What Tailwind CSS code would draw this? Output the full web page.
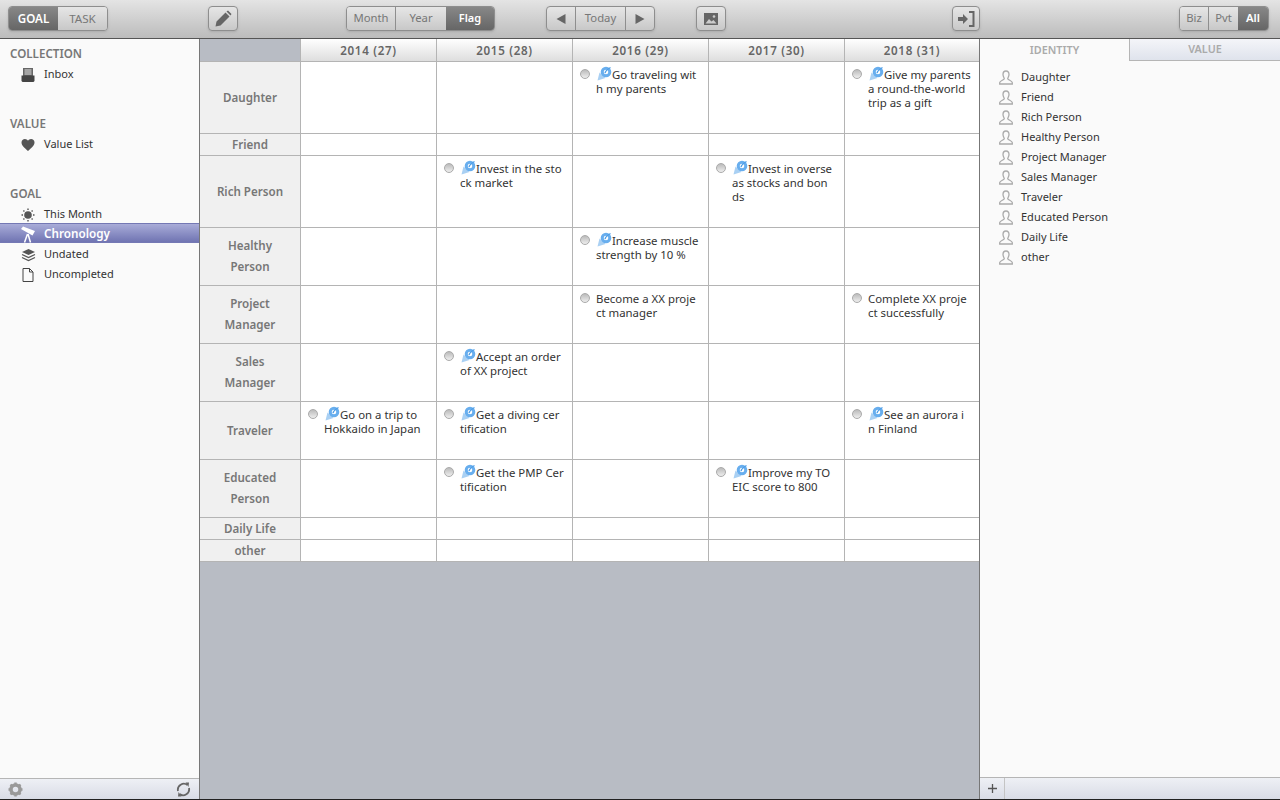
<!DOCTYPE html>
<html lang="en">
  <head>
    <meta charset="UTF-8" />
    <title>Chronology</title>
    <script src="https://cdn.jsdelivr.net/npm/@tailwindcss/browser@4"></script>
  </head>
  <body class="w-[1280px] h-[800px] overflow-hidden flex flex-col bg-white font-['Noto_Sans',sans-serif] text-[11px] text-[#333]">
    <svg class="hidden">
      <symbol id="goal" viewBox="0 0 15 15">
        <path d="M0.500 14.500 L2.500 6.500 L8.500 12 Z" fill="#a9d0f3" />
        <circle cx="9" cy="6" r="3.800" fill="#fff" stroke="#68aeee" stroke-width="3" />
        <path d="M8 7 C8.500 5 10 3.500 13.500 1.500" fill="none" stroke="#4f9ee6" stroke-width="1.400" />
      </symbol>
      <symbol id="person" viewBox="0 0 14 15">
        <path d="M7 1 C5 1 4 2.500 4 4.500 C4 6.500 5 7.500 5.300 8.500 C5.300 10 1 10.500 0.700 12.500 V14 H13.300 V12.500 C13 10.500 8.700 10 8.700 8.500 C9 7.500 10 6.500 10 4.500 C10 2.500 9 1 7 1 Z" fill="none" stroke="#aaa" stroke-width="1.300" />
      </symbol>
    </svg>

    <!-- toolbar -->
    <header class="h-[39px] shrink-0 flex items-start pt-[6px] pl-2 bg-gradient-to-b from-[#e4e4e4] to-[#bcbcbc] border-b border-[#555] text-[11.3px]">
      <div class="flex h-[25px] rounded-[4px] border border-[#8e8e8e] overflow-hidden shadow-sm text-[11.6px]">
        <div class="w-[49px] flex items-center justify-center bg-gradient-to-b from-[#888] to-[#666] text-white font-semibold">GOAL</div>
        <div class="w-[49px] flex items-center justify-center bg-gradient-to-b from-[#e6e6e6] to-[#c8c8c8] text-[#777]">TASK</div>
      </div>
      <div class="ml-[100px] w-[30px] h-[25px] flex items-center justify-center rounded-[4px] border border-[#8e8e8e] shadow-sm bg-gradient-to-b from-[#e6e6e6] to-[#c8c8c8]">
        <svg width="17" height="17" viewBox="0 0 17 17"><path d="M0.500 16.500 L1.500 11.500 L10.500 2.500 L14.500 6.500 L5.500 15.500 Z M11.500 1.500 L13 0.500 L16.500 4 L15.500 5.500 Z" fill="#666" /></svg>
      </div>
      <div class="ml-[108px] flex h-[25px] rounded-[4px] border border-[#8e8e8e] overflow-hidden shadow-sm">
        <div class="w-[49px] flex items-center justify-center border-r border-[#8e8e8e] bg-gradient-to-b from-[#e6e6e6] to-[#c8c8c8] text-[#777]">Month</div>
        <div class="w-[50px] flex items-center justify-center bg-gradient-to-b from-[#e6e6e6] to-[#c8c8c8] text-[#777]">Year</div>
        <div class="w-[48px] flex items-center justify-center bg-gradient-to-b from-[#888] to-[#666] text-white font-semibold text-[11px]">Flag</div>
      </div>
      <div class="ml-[51px] flex h-[25px] rounded-[4px] border border-[#8e8e8e] overflow-hidden shadow-sm bg-gradient-to-b from-[#e6e6e6] to-[#c8c8c8] text-[#777]">
        <div class="w-[29px] flex items-center justify-center border-r border-[#8e8e8e]">
          <svg width="10" height="10" viewBox="0 0 10 10"><path d="M9.500 0 V10 L0.500 5 Z" fill="#666" /></svg>
        </div>
        <div class="w-[50px] flex items-center justify-center border-r border-[#8e8e8e]">Today</div>
        <div class="w-[28px] flex items-center justify-center">
          <svg width="10" height="10" viewBox="0 0 10 10"><path d="M0.500 0 V10 L9.500 5 Z" fill="#666" /></svg>
        </div>
      </div>
      <div class="ml-[41px] w-[30px] h-[25px] flex items-center justify-center rounded-[4px] border border-[#8e8e8e] shadow-sm bg-gradient-to-b from-[#e6e6e6] to-[#c8c8c8]">
        <svg width="14" height="12" viewBox="0 0 14 12"><path d="M0 0 H14 V12 H0 Z" fill="#666" /><path d="M1.500 10.500 L5 6 L7.500 8.500 L9.500 7 L12.500 10.500 Z" fill="#ccc" /><circle cx="10" cy="3.500" r="1.300" fill="#ccc" /></svg>
      </div>
      <div class="ml-[226px] w-[28px] h-[25px] flex items-center justify-center rounded-[4px] border border-[#8e8e8e] shadow-sm bg-gradient-to-b from-[#e6e6e6] to-[#c8c8c8]">
        <svg width="17" height="16" viewBox="0 0 17 16"><path d="M0 6 H5 V3 L10 8 L5 13 V10 H0 Z" fill="#666" /><path d="M11 1 H15.500 V15 H11" fill="none" stroke="#666" stroke-width="2" /></svg>
      </div>
      <div class="ml-[199px] flex h-[25px] rounded-[4px] border border-[#8e8e8e] overflow-hidden shadow-sm">
        <div class="w-[29px] flex items-center justify-center border-r border-[#8e8e8e] bg-gradient-to-b from-[#e6e6e6] to-[#c8c8c8] text-[#777]">Biz</div>
        <div class="w-[29px] flex items-center justify-center bg-gradient-to-b from-[#e6e6e6] to-[#c8c8c8] text-[#777]">Pvt</div>
        <div class="w-[30px] flex items-center justify-center bg-gradient-to-b from-[#888] to-[#666] text-white font-semibold">All</div>
      </div>
    </header>

    <div class="flex flex-1 min-h-0">
      <!-- left sidebar -->
      <aside class="w-[200px] shrink-0 flex flex-col bg-[#fafafa] border-r border-[#777]">
        <div class="flex-1 pt-[5px]">
          <div class="h-5 pl-[10px] flex items-center font-semibold text-[#777] text-[11.6px]">COLLECTION</div>
          <div class="h-5 pl-[21px] pt-px flex items-center gap-[9px]">
            <svg width="14" height="14" viewBox="0 0 14 14"><path d="M2 0 H12 V8 H2 Z" fill="#666" /><path d="M3.500 2 H10.500 M3.500 4 H10.500 M3.500 6 H10.500" stroke="#e4e4e4" /><path d="M0.500 7.500 H13.500 V13 L12.500 14 H1.500 L0.500 13 Z" fill="#444" /></svg>
            <span>Inbox</span>
          </div>
          <div class="h-5 mt-[30px] pl-[10px] flex items-center font-semibold text-[#777] text-[11.6px]">VALUE</div>
          <div class="h-5 pl-[21px] pt-px flex items-center gap-[9px]">
            <svg width="14" height="14" viewBox="0 0 14 14"><path d="M7 13 C3 9.500 0.500 7.500 0.500 4.500 C0.500 2.500 2 1 4 1 C5.200 1 6.400 1.700 7 2.800 C7.600 1.700 8.800 1 10 1 C12 1 13.500 2.500 13.500 4.500 C13.500 7.500 11 9.500 7 13 Z" fill="#555" /></svg>
            <span>Value List</span>
          </div>
          <div class="h-5 mt-[30px] pl-[10px] flex items-center font-semibold text-[#777] text-[11.6px]">GOAL</div>
          <div class="h-5 pl-[21px] pt-px flex items-center gap-[9px]">
            <svg width="14" height="14" viewBox="0 0 14 14"><circle cx="7" cy="7" r="3.800" fill="#555" /><path d="M7 0.500 V2 M7 12 V13.500 M0.500 7 H2 M12 7 H13.500 M2.400 2.400 L3.400 3.400 M10.600 10.600 L11.600 11.600 M2.400 11.600 L3.400 10.600 M10.600 3.400 L11.600 2.400" stroke="#555" stroke-width="1.400" /></svg>
            <span>This Month</span>
          </div>
          <div class="h-5 -mt-px mb-px pl-[21px] pt-[2px] flex items-center gap-[9px] bg-gradient-to-b from-[#a9acd8] to-[#7074b2] border-y border-[#7478b4] text-white font-semibold text-[11.7px]">
            <svg width="14" height="17" viewBox="0 0 14 17"><path d="M0 3 L2 0.500 L14 5 L11.500 9.500 Z" fill="#fff" /><path d="M6.500 8 L3.500 16.500 M7 8 L9.500 16.500" stroke="#fff" stroke-width="1.500" /></svg>
            <span>Chronology</span>
          </div>
          <div class="h-5 pl-[21px] pt-px flex items-center gap-[8px]">
            <svg width="15" height="14" viewBox="0 0 15 14"><path d="M7.500 1 L14 4 L7.500 7 L1 4 Z" fill="#555" /><path d="M1 6.500 L7.500 9.500 L14 6.500 M1 9.500 L7.500 12.500 L14 9.500" fill="none" stroke="#555" stroke-width="1.300" /></svg>
            <span>Undated</span>
          </div>
          <div class="h-5 pl-[21px] pt-px flex items-center gap-[9px]">
            <svg width="14" height="14" viewBox="0 0 14 14"><path d="M2 0.500 H8.500 L12 4 V13.500 H2 Z M8.500 0.500 V4 H12" fill="none" stroke="#444" /></svg>
            <span>Uncompleted</span>
          </div>
        </div>
        <div class="h-[21px] shrink-0 flex items-center justify-between px-2 border-t border-[#b5b5b5] bg-gradient-to-b from-[#eef0f5] to-[#d9dce6]">
          <svg width="15" height="15" viewBox="0 0 15 15"><circle cx="7.500" cy="7.500" r="4.500" fill="none" stroke="#999" stroke-width="3.500" /><path d="M7.500 0.500 V3 M7.500 12 V14.500 M0.500 7.500 H3 M12 7.500 H14.500 M2.500 2.500 L4 4 M11 11 L12.500 12.500 M2.500 12.500 L4 11 M11 4 L12.500 2.500" stroke="#999" stroke-width="2.400" /></svg>
          <svg width="15" height="15" viewBox="0 0 15 15"><path d="M2 9 A6 6 0 0 1 11.500 3 M13 6 A6 6 0 0 1 3.500 12" fill="none" stroke="#666" stroke-width="1.800" /><path d="M9.500 0.500 L13 0.500 L12.500 5 Z M5.500 14.500 L2 14.500 L2.500 10 Z" fill="#666" /></svg>
        </div>
      </aside>

      <!-- chronology grid -->
      <main class="w-[779px] shrink-0 bg-[#b8bcc4]">
        <div class="grid grid-cols-[101px_136px_136px_136px_136px_134px] grid-rows-[23px_72px_22px_72px_58px_58px_58px_58px_58px_22px_22px] text-[11.4px] text-[#333]">
          <div class="border-r border-b border-[#b4b4b4]"></div>
          <div class="flex items-center justify-center pt-px border-r border-b border-[#b4b4b4] bg-gradient-to-b from-white to-[#dedede] font-semibold text-[#666] text-[11.6px] tracking-[0.7px]">2014 (27)</div>
          <div class="flex items-center justify-center pt-px border-r border-b border-[#b4b4b4] bg-gradient-to-b from-white to-[#dedede] font-semibold text-[#666] text-[11.6px] tracking-[0.7px]">2015 (28)</div>
          <div class="flex items-center justify-center pt-px border-r border-b border-[#b4b4b4] bg-gradient-to-b from-white to-[#dedede] font-semibold text-[#666] text-[11.6px] tracking-[0.7px]">2016 (29)</div>
          <div class="flex items-center justify-center pt-px border-r border-b border-[#b4b4b4] bg-gradient-to-b from-white to-[#dedede] font-semibold text-[#666] text-[11.6px] tracking-[0.7px]">2017 (30)</div>
          <div class="flex items-center justify-center pt-px border-b border-[#b4b4b4] bg-gradient-to-b from-white to-[#dedede] font-semibold text-[#666] text-[11.6px] tracking-[0.7px]">2018 (31)</div>

          <div class="flex items-center justify-center text-center leading-[21px] bg-[#f0f0f0] border-r border-b border-[#b4b4b4] font-semibold text-[#777] text-[11.6px]">Daughter</div>
          <div class="bg-white border-r border-b border-[#b4b4b4]"></div>
          <div class="bg-white border-r border-b border-[#b4b4b4]"></div>
          <div class="bg-white border-r border-b border-[#b4b4b4] flex gap-[6px] pl-[7px] pt-[6px] leading-[14px]">
            <span class="w-[10px] h-[10px] mt-px rounded-full shrink-0 bg-gradient-to-b from-[#bbb] to-[#eee] border border-[#aaa]"></span>
            <div class="whitespace-nowrap"><svg class="inline-block align-top w-[15px] h-[15px] -mt-[2px] ml-[1px]"><use href="#goal" /></svg>Go traveling wit<br />h my parents</div>
          </div>
          <div class="bg-white border-r border-b border-[#b4b4b4]"></div>
          <div class="bg-white border-b border-[#b4b4b4] flex gap-[6px] pl-[7px] pt-[6px] leading-[14px]">
            <span class="w-[10px] h-[10px] mt-px rounded-full shrink-0 bg-gradient-to-b from-[#bbb] to-[#eee] border border-[#aaa]"></span>
            <div class="whitespace-nowrap"><svg class="inline-block align-top w-[15px] h-[15px] -mt-[2px] ml-[1px]"><use href="#goal" /></svg>Give my parents<br />a round-the-world<br />trip as a gift</div>
          </div>

          <div class="flex items-center justify-center text-center leading-[21px] bg-[#f0f0f0] border-r border-b border-[#b4b4b4] font-semibold text-[#777] text-[11.6px]">Friend</div>
          <div class="bg-white border-r border-b border-[#b4b4b4]"></div>
          <div class="bg-white border-r border-b border-[#b4b4b4]"></div>
          <div class="bg-white border-r border-b border-[#b4b4b4]"></div>
          <div class="bg-white border-r border-b border-[#b4b4b4]"></div>
          <div class="bg-white border-b border-[#b4b4b4]"></div>

          <div class="flex items-center justify-center text-center leading-[21px] bg-[#f0f0f0] border-r border-b border-[#b4b4b4] font-semibold text-[#777] text-[11.6px]">Rich Person</div>
          <div class="bg-white border-r border-b border-[#b4b4b4]"></div>
          <div class="bg-white border-r border-b border-[#b4b4b4] flex gap-[6px] pl-[7px] pt-[6px] leading-[14px]">
            <span class="w-[10px] h-[10px] mt-px rounded-full shrink-0 bg-gradient-to-b from-[#bbb] to-[#eee] border border-[#aaa]"></span>
            <div class="whitespace-nowrap"><svg class="inline-block align-top w-[15px] h-[15px] -mt-[2px] ml-[1px]"><use href="#goal" /></svg>Invest in the sto<br />ck market</div>
          </div>
          <div class="bg-white border-r border-b border-[#b4b4b4]"></div>
          <div class="bg-white border-r border-b border-[#b4b4b4] flex gap-[6px] pl-[7px] pt-[6px] leading-[14px]">
            <span class="w-[10px] h-[10px] mt-px rounded-full shrink-0 bg-gradient-to-b from-[#bbb] to-[#eee] border border-[#aaa]"></span>
            <div class="whitespace-nowrap"><svg class="inline-block align-top w-[15px] h-[15px] -mt-[2px] ml-[1px]"><use href="#goal" /></svg>Invest in overse<br />as stocks and bon<br />ds</div>
          </div>
          <div class="bg-white border-b border-[#b4b4b4]"></div>

          <div class="flex items-center justify-center text-center pb-px leading-[21px] bg-[#f0f0f0] border-r border-b border-[#b4b4b4] font-semibold text-[#777] text-[11.6px]">Healthy<br />Person</div>
          <div class="bg-white border-r border-b border-[#b4b4b4]"></div>
          <div class="bg-white border-r border-b border-[#b4b4b4]"></div>
          <div class="bg-white border-r border-b border-[#b4b4b4] flex gap-[6px] pl-[7px] pt-[6px] leading-[14px]">
            <span class="w-[10px] h-[10px] mt-px rounded-full shrink-0 bg-gradient-to-b from-[#bbb] to-[#eee] border border-[#aaa]"></span>
            <div class="whitespace-nowrap"><svg class="inline-block align-top w-[15px] h-[15px] -mt-[2px] ml-[1px]"><use href="#goal" /></svg>Increase muscle<br />strength by 10 %</div>
          </div>
          <div class="bg-white border-r border-b border-[#b4b4b4]"></div>
          <div class="bg-white border-b border-[#b4b4b4]"></div>

          <div class="flex items-center justify-center text-center pb-px leading-[21px] bg-[#f0f0f0] border-r border-b border-[#b4b4b4] font-semibold text-[#777] text-[11.6px]">Project<br />Manager</div>
          <div class="bg-white border-r border-b border-[#b4b4b4]"></div>
          <div class="bg-white border-r border-b border-[#b4b4b4]"></div>
          <div class="bg-white border-r border-b border-[#b4b4b4] flex gap-[6px] pl-[7px] pt-[6px] leading-[14px]">
            <span class="w-[10px] h-[10px] mt-px rounded-full shrink-0 bg-gradient-to-b from-[#bbb] to-[#eee] border border-[#aaa]"></span>
            <div class="whitespace-nowrap">Become a XX proje<br />ct manager</div>
          </div>
          <div class="bg-white border-r border-b border-[#b4b4b4]"></div>
          <div class="bg-white border-b border-[#b4b4b4] flex gap-[6px] pl-[7px] pt-[6px] leading-[14px]">
            <span class="w-[10px] h-[10px] mt-px rounded-full shrink-0 bg-gradient-to-b from-[#bbb] to-[#eee] border border-[#aaa]"></span>
            <div class="whitespace-nowrap">Complete XX proje<br />ct successfully</div>
          </div>

          <div class="flex items-center justify-center text-center pb-px leading-[21px] bg-[#f0f0f0] border-r border-b border-[#b4b4b4] font-semibold text-[#777] text-[11.6px]">Sales<br />Manager</div>
          <div class="bg-white border-r border-b border-[#b4b4b4]"></div>
          <div class="bg-white border-r border-b border-[#b4b4b4] flex gap-[6px] pl-[7px] pt-[6px] leading-[14px]">
            <span class="w-[10px] h-[10px] mt-px rounded-full shrink-0 bg-gradient-to-b from-[#bbb] to-[#eee] border border-[#aaa]"></span>
            <div class="whitespace-nowrap"><svg class="inline-block align-top w-[15px] h-[15px] -mt-[2px] ml-[1px]"><use href="#goal" /></svg>Accept an order<br />of XX project</div>
          </div>
          <div class="bg-white border-r border-b border-[#b4b4b4]"></div>
          <div class="bg-white border-r border-b border-[#b4b4b4]"></div>
          <div class="bg-white border-b border-[#b4b4b4]"></div>

          <div class="flex items-center justify-center text-center leading-[21px] bg-[#f0f0f0] border-r border-b border-[#b4b4b4] font-semibold text-[#777] text-[11.6px]">Traveler</div>
          <div class="bg-white border-r border-b border-[#b4b4b4] flex gap-[6px] pl-[7px] pt-[6px] leading-[14px]">
            <span class="w-[10px] h-[10px] mt-px rounded-full shrink-0 bg-gradient-to-b from-[#bbb] to-[#eee] border border-[#aaa]"></span>
            <div class="whitespace-nowrap"><svg class="inline-block align-top w-[15px] h-[15px] -mt-[2px] ml-[1px]"><use href="#goal" /></svg>Go on a trip to<br />Hokkaido in Japan</div>
          </div>
          <div class="bg-white border-r border-b border-[#b4b4b4] flex gap-[6px] pl-[7px] pt-[6px] leading-[14px]">
            <span class="w-[10px] h-[10px] mt-px rounded-full shrink-0 bg-gradient-to-b from-[#bbb] to-[#eee] border border-[#aaa]"></span>
            <div class="whitespace-nowrap"><svg class="inline-block align-top w-[15px] h-[15px] -mt-[2px] ml-[1px]"><use href="#goal" /></svg>Get a diving cer<br />tification</div>
          </div>
          <div class="bg-white border-r border-b border-[#b4b4b4]"></div>
          <div class="bg-white border-r border-b border-[#b4b4b4]"></div>
          <div class="bg-white border-b border-[#b4b4b4] flex gap-[6px] pl-[7px] pt-[6px] leading-[14px]">
            <span class="w-[10px] h-[10px] mt-px rounded-full shrink-0 bg-gradient-to-b from-[#bbb] to-[#eee] border border-[#aaa]"></span>
            <div class="whitespace-nowrap"><svg class="inline-block align-top w-[15px] h-[15px] -mt-[2px] ml-[1px]"><use href="#goal" /></svg>See an aurora i<br />n Finland</div>
          </div>

          <div class="flex items-center justify-center text-center pb-px leading-[21px] bg-[#f0f0f0] border-r border-b border-[#b4b4b4] font-semibold text-[#777] text-[11.6px]">Educated<br />Person</div>
          <div class="bg-white border-r border-b border-[#b4b4b4]"></div>
          <div class="bg-white border-r border-b border-[#b4b4b4] flex gap-[6px] pl-[7px] pt-[6px] leading-[14px]">
            <span class="w-[10px] h-[10px] mt-px rounded-full shrink-0 bg-gradient-to-b from-[#bbb] to-[#eee] border border-[#aaa]"></span>
            <div class="whitespace-nowrap"><svg class="inline-block align-top w-[15px] h-[15px] -mt-[2px] ml-[1px]"><use href="#goal" /></svg>Get the PMP Cer<br />tification</div>
          </div>
          <div class="bg-white border-r border-b border-[#b4b4b4]"></div>
          <div class="bg-white border-r border-b border-[#b4b4b4] flex gap-[6px] pl-[7px] pt-[6px] leading-[14px]">
            <span class="w-[10px] h-[10px] mt-px rounded-full shrink-0 bg-gradient-to-b from-[#bbb] to-[#eee] border border-[#aaa]"></span>
            <div class="whitespace-nowrap"><svg class="inline-block align-top w-[15px] h-[15px] -mt-[2px] ml-[1px]"><use href="#goal" /></svg>Improve my TO<br />EIC score to 800</div>
          </div>
          <div class="bg-white border-b border-[#b4b4b4]"></div>

          <div class="flex items-center justify-center text-center leading-[21px] bg-[#f0f0f0] border-r border-b border-[#b4b4b4] font-semibold text-[#777] text-[11.6px]">Daily Life</div>
          <div class="bg-white border-r border-b border-[#b4b4b4]"></div>
          <div class="bg-white border-r border-b border-[#b4b4b4]"></div>
          <div class="bg-white border-r border-b border-[#b4b4b4]"></div>
          <div class="bg-white border-r border-b border-[#b4b4b4]"></div>
          <div class="bg-white border-b border-[#b4b4b4]"></div>

          <div class="flex items-center justify-center text-center leading-[21px] bg-[#f0f0f0] border-r border-b border-[#b4b4b4] font-semibold text-[#777] text-[11.6px]">other</div>
          <div class="bg-white border-r border-b border-[#b4b4b4]"></div>
          <div class="bg-white border-r border-b border-[#b4b4b4]"></div>
          <div class="bg-white border-r border-b border-[#b4b4b4]"></div>
          <div class="bg-white border-r border-b border-[#b4b4b4]"></div>
          <div class="bg-white border-b border-[#b4b4b4]"></div>
        </div>
      </main>

      <!-- right panel -->
      <aside class="w-[301px] shrink-0 flex flex-col bg-[#fafafa] border-l border-[#777]">
        <div class="flex h-[22px] shrink-0 font-semibold text-[#aaa] text-[10.8px]">
          <div class="w-[149px] flex items-center justify-center">IDENTITY</div>
          <div class="flex-1 flex items-center justify-center border-l border-b border-[#b5b5b5] bg-gradient-to-b from-[#f4f5f9] to-[#dfe3ec]">VALUE</div>
        </div>
        <div class="flex-1 pt-[6px] pl-[19px]">
          <div class="h-5 pt-px flex items-center gap-[8px]"><svg class="w-[14px] h-[15px]"><use href="#person" /></svg><span>Daughter</span></div>
          <div class="h-5 pt-px flex items-center gap-[8px]"><svg class="w-[14px] h-[15px]"><use href="#person" /></svg><span>Friend</span></div>
          <div class="h-5 pt-px flex items-center gap-[8px]"><svg class="w-[14px] h-[15px]"><use href="#person" /></svg><span>Rich Person</span></div>
          <div class="h-5 pt-px flex items-center gap-[8px]"><svg class="w-[14px] h-[15px]"><use href="#person" /></svg><span>Healthy Person</span></div>
          <div class="h-5 pt-px flex items-center gap-[8px]"><svg class="w-[14px] h-[15px]"><use href="#person" /></svg><span>Project Manager</span></div>
          <div class="h-5 pt-px flex items-center gap-[8px]"><svg class="w-[14px] h-[15px]"><use href="#person" /></svg><span>Sales Manager</span></div>
          <div class="h-5 pt-px flex items-center gap-[8px]"><svg class="w-[14px] h-[15px]"><use href="#person" /></svg><span>Traveler</span></div>
          <div class="h-5 pt-px flex items-center gap-[8px]"><svg class="w-[14px] h-[15px]"><use href="#person" /></svg><span>Educated Person</span></div>
          <div class="h-5 pt-px flex items-center gap-[8px]"><svg class="w-[14px] h-[15px]"><use href="#person" /></svg><span>Daily Life</span></div>
          <div class="h-5 pt-px flex items-center gap-[8px]"><svg class="w-[14px] h-[15px]"><use href="#person" /></svg><span>other</span></div>
        </div>
        <div class="h-[22px] shrink-0 flex border-t border-[#b5b5b5] bg-gradient-to-b from-[#eef0f5] to-[#d9dce6]">
          <div class="w-[25px] flex items-center justify-center border-r border-[#c4c4c4]">
            <svg width="9" height="9" viewBox="0 0 9 9"><path d="M4.500 0 V9 M0 4.500 H9" stroke="#555" stroke-width="1.300" /></svg>
          </div>
        </div>
      </aside>
    </div>
    <div class="h-px shrink-0 bg-[#222]"></div>
  </body>
</html>
